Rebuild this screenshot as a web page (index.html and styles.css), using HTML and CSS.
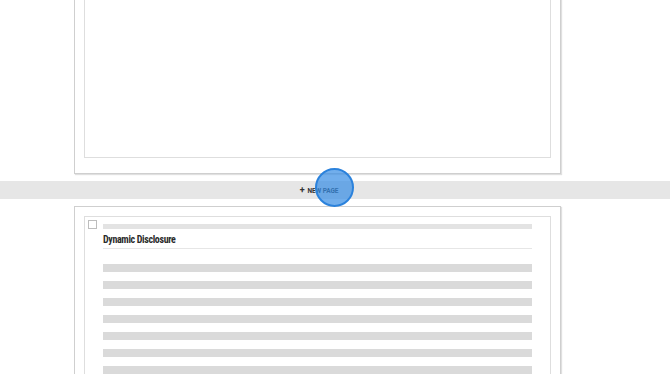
FILE: index.html
```html
<!DOCTYPE html>
<html>
<head>
<meta charset="utf-8">
<link rel="stylesheet" href="styles.css">
</head>
<body>
<div class="doc">
  <div class="page page-top">
    <div class="sheet sheet-top"></div>
  </div>
  <div class="divider">
    <button class="new-page"><span class="plus">+</span>NEW PAGE</button>
    <span class="cursor"></span>
  </div>
  <div class="page page-bottom">
    <div class="sheet sheet-bottom">
      <span class="check"></span>
      <div class="content">
        <div class="bar bar-thin"></div>
        <h2 class="title">Dynamic Disclosure</h2>
        <div class="rule"></div>
        <div class="lines">
          <div class="bar"></div>
          <div class="bar"></div>
          <div class="bar"></div>
          <div class="bar"></div>
          <div class="bar"></div>
          <div class="bar"></div>
          <div class="bar"></div>
        </div>
      </div>
    </div>
  </div>
</div>
</body>
</html>
```
FILE: styles.css
```css
html, body {
  margin: 0;
  padding: 0;
  background: #fff;
  overflow: hidden;
  height: 374px;
  font-family: Roboto, "Liberation Sans", sans-serif;
}
.doc {
  display: flex;
  flex-direction: column;
  margin-top: -40px;
}
.page {
  margin-left: 74px;
  border: 1px solid #cfcfcf;
  box-shadow: 1px 1px 1px rgba(0,0,0,0.12);
  background: #fff;
  box-sizing: border-box;
  width: 487px;
}
.page-top {
  padding: 0 9px 16px 9px;
  height: 214px;
}
.sheet {
  border: 1px solid #dedede;
  box-sizing: border-box;
}
.sheet-top {
  height: 197px;
}
.divider {
  position: relative;
  margin: 7px 0;
  height: 18px;
  background: #e6e6e6;
  display: flex;
  align-items: center;
  justify-content: center;
}
.new-page {
  border: 0;
  background: transparent;
  padding: 0;
  margin-left: -32px;
  font-family: "Roboto", sans-serif;
  font-size: 6.5px;
  font-weight: 700;
  color: #333;
  letter-spacing: -0.1px;
  display: flex;
  align-items: center;
  line-height: 1;
  margin-top: 2px;
}
.plus {
  font-size: 9px;
  margin-right: 3px;
  margin-top: -1px;
}
.cursor {
  position: absolute;
  left: 315px;
  top: -13px;
  width: 35px;
  height: 35px;
  border-radius: 50%;
  border: 2px solid #2b82dc;
  background: rgba(52, 140, 228, 0.7);
}
.page-bottom {
  padding: 9px 9px 0 9px;
  height: 175px;
  overflow: hidden;
}
.sheet-bottom {
  height: 170px;
  display: flex;
  border-bottom: 0;
}
.check {
  flex: none;
  width: 7px;
  height: 7px;
  border: 1px solid #bdbdbd;
  margin: 3px 0 0 3px;
}
.content {
  flex: 1;
  margin: 0 18px 0 6px;
  padding-top: 7px;
}
.bar {
  height: 8px;
  background: #dadada;
}
.bar-thin {
  height: 5px;
  background: #e3e3e3;
}
.title {
  margin: 5px 0 0 0;
  font-family: "Roboto", sans-serif;
  font-stretch: condensed;
  font-size: 10px;
  font-weight: 700;
  color: #2b2b2b;
  line-height: 12px;
  letter-spacing: -0.35px;
}
.rule {
  margin-top: 2px;
  height: 1px;
  background: #e6e6e6;
}
.lines {
  margin-top: 15px;
  display: flex;
  flex-direction: column;
  gap: 9px;
}
```
